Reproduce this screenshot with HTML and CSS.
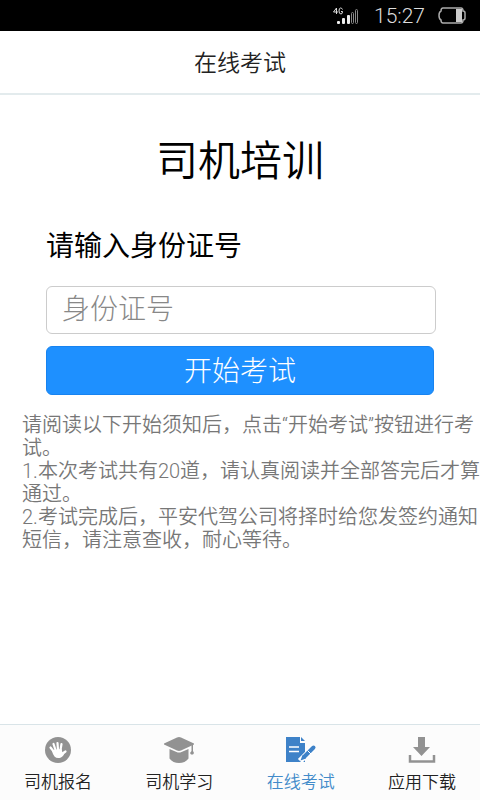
FILE: index.html
```html
<!DOCTYPE html>
<html lang="zh-CN">
<head>
  <meta charset="UTF-8">
  <meta name="viewport" content="width=device-width, initial-scale=1.0">
  <title>在线考试</title>
  <link rel="stylesheet" href="styles.css">
</head>
<body>
  <div class="statusbar">
    <svg class="signal" width="26" height="18" viewBox="0 0 26 18">
      <g fill="none" stroke="#ddd" stroke-width="1">
        <path d="M3.5 7V1L0.5 5H5M9.5 2.5Q9 1 7.5 1Q6 1 6 4Q6 7 8 7Q9.5 7 9.5 4.500H8"/>
      </g>
      <g fill="#eee">
        <rect x="4" y="14" width="3" height="3" rx="1"/>
        <rect x="9" y="11" width="3" height="6" rx="1"/>
        <rect x="14" y="8" width="3" height="9" rx="1"/>
      </g>
      <g fill="none" stroke="#888">
        <rect x="18.500" y="5.500" width="2" height="11" rx="1"/>
        <rect x="22.500" y="2.500" width="2" height="14" rx="1"/>
      </g>
    </svg>
    <span class="clock">15:27</span>
    <svg class="battery" width="28" height="17" viewBox="0 0 28 17">
      <path d="M5 1H23Q25 1 25 4Q27 4 27 6V11Q27 13 25 13Q25 16 23 16H5Q3 16 3 13Q1 12 1 8.500Q1 5 3 4Q3 1 5 1Z" fill="none" stroke="#aaa" stroke-width="1.500"/>
      <rect x="18" y="2" width="6" height="13" fill="#ccc"/>
    </svg>
  </div>

  <header class="header">在线考试</header>

  <main class="content">
    <h1>司机培训</h1>
    <form class="exam-form">
      <label for="idcard">请输入身份证号</label>
      <input type="text" id="idcard" placeholder="身份证号">
      <button type="button">开始考试</button>
    </form>
    <p class="notice">
      请阅读以下开始须知后，点击“开始考试”按钮进行考试。<br>
      1.本次考试共有20道，请认真阅读并全部答完后才算通过。<br>
      2.考试完成后，平安代驾公司将择时给您发签约通知短信，请注意查收，耐心等待。
    </p>
  </main>

  <nav class="tabbar">
    <a href="#">
      <svg width="32" height="28" viewBox="0 0 32 28">
        <circle cx="16" cy="14" r="13" fill="#929292"/>
        <g fill="none" stroke="#fff" stroke-width="2.200" stroke-linecap="round">
          <path d="M12 16L8.500 11.500M13.500 14L11.500 8M16 14L15.500 7M18.500 14L19.500 8M20 18L23.500 15.500"/>
        </g>
        <path d="M11 14L19.500 13L20.500 16.500L23 15Q22 20 19 21.500Q15 23 12.500 20.500Q11 19 10 15Z" fill="#fff"/>
      </svg>
      <span>司机报名</span>
    </a>
    <a href="#">
      <svg width="32" height="28" viewBox="0 0 32 28">
        <g fill="#929292">
          <path d="M16 1Q17 1 18 1.500L31 7.500V8.500L18 14.500Q16 15.300 14 14.500L1 8.500V7.500L14 1.500Q15 1 16 1Z"/>
          <path d="M6.500 13L13.500 16Q16 17 18.500 16L25.500 13V22.500Q22 27 16 27Q10 27 6.500 22.500Z"/>
          <path d="M28.500 8.500H30V15L31 17L30 18.500H28L27 17L28.500 15Z"/>
        </g>
      </svg>
      <span>司机学习</span>
    </a>
    <a href="#" class="active">
      <svg width="32" height="28" viewBox="0 0 32 28">
        <path d="M1 1H15V7H20V26H1ZM16 1L20 5H16Z" fill="#3e82c8"/>
        <path d="M4 11H14M4 15.500H14" stroke="#fff" stroke-width="1.600"/>
        <path d="M15 25L29 11" stroke="#fff" stroke-width="6"/>
        <path d="M19.500 20.500L28.500 11.500" stroke="#3e82c8" stroke-width="4" stroke-linecap="round"/>
        <path d="M15.500 24.500L17.500 19L21 22.500Z" fill="#3e82c8"/>
        <path d="M22.500 14.500L26 18" stroke="#fff" stroke-width="1"/>
      </svg>
      <span>在线考试</span>
    </a>
    <a href="#">
      <svg width="32" height="28" viewBox="0 0 32 28">
        <path d="M12 1H19V11H24L15.500 20L7 11H12Z" fill="#929292"/>
        <path d="M4 19V25.500H28V19" fill="none" stroke="#929292" stroke-width="2.500"/>
      </svg>
      <span>应用下载</span>
    </a>
  </nav>
</body>
</html>
```
FILE: styles.css
```css
* {
  box-sizing: border-box;
}
body {
  margin: 0;
  min-height: 100vh;
  display: flex;
  flex-direction: column;
  background: #fff;
  font-family: Roboto, "Noto Sans CJK SC", sans-serif;
  font-weight: 350;
  color: #000;
}
.statusbar {
  height: 31px;
  padding: 0 14px;
  background: #000;
  display: flex;
  align-items: center;
  justify-content: flex-end;
}
.signal {
  margin-right: 15px;
}
.clock {
  margin-right: 13px;
  color: #ddd;
  font-size: 21px;
  font-weight: 300;
}
.header {
  height: 64px;
  line-height: 66px;
  border-bottom: 2px solid #e3ebed;
  text-align: center;
  font-size: 23px;
  color: #222;
}
.content {
  flex: 1;
}
h1 {
  margin: 37px 0 35px;
  text-align: center;
  font-size: 42px;
  line-height: 60px;
  font-weight: 350;
}
.exam-form {
  display: flex;
  flex-direction: column;
  padding: 0 44px 0 46px;
}
label {
  font-size: 28px;
  line-height: 40px;
  font-weight: 400;
  margin-bottom: 19px;
}
input {
  width: 100%;
  height: 48px;
  padding: 0 15px 2px;
  border: 1px solid #ccc;
  border-radius: 6px;
  background: #fff;
  font: inherit;
  font-size: 28px;
  font-weight: 300;
}
input::placeholder {
  color: #888;
}
button {
  height: 49px;
  margin: 12px 2px 0 0;
  padding: 0 0 4px;
  border: 1px solid #1783f0;
  border-radius: 6px;
  background: #1e90ff;
  color: #fff;
  font: inherit;
  font-size: 28px;
  font-weight: 300;
}
.notice {
  margin: 19px -4px 0 0;
  padding-left: 22px;
  font-size: 20px;
  line-height: 23px;
  color: #777;
}
.tabbar {
  display: flex;
  justify-content: space-between;
  height: 76px;
  padding: 0 24px;
  border-top: 1px solid #d9e4e8;
  background: #fcfcfc;
}
.tabbar a {
  display: flex;
  flex-direction: column;
  align-items: center;
  padding-top: 11px;
  color: #222;
  font-size: 17px;
  line-height: 24px;
  text-decoration: none;
}
.tabbar span {
  margin-top: 6px;
}
.tabbar .active {
  color: #428bca;
}
```
